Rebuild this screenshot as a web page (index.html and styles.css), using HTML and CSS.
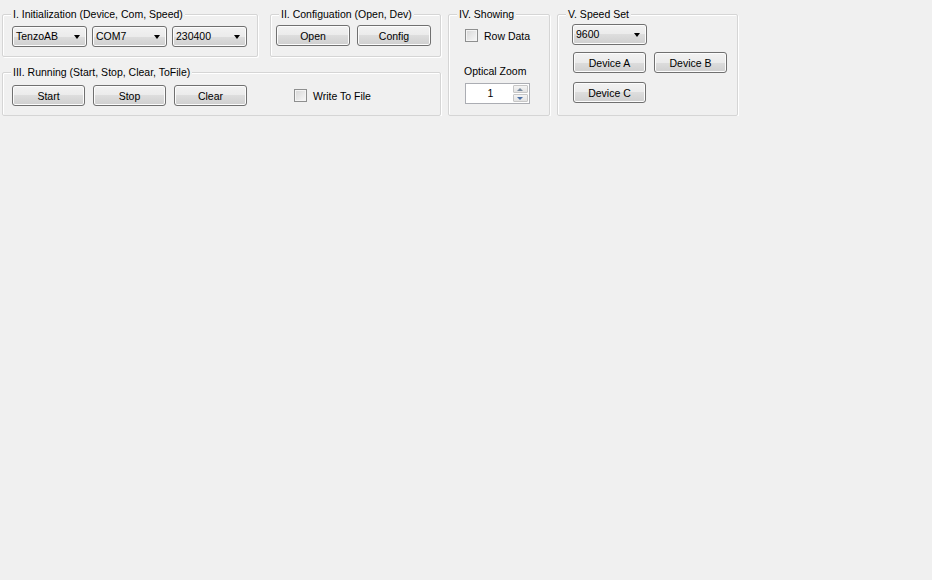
FILE: index.html
```html
<!DOCTYPE html>
<html lang="en">
<head>
    <meta charset="UTF-8">
    <title>Tenzo Monitor</title>
    <link rel="stylesheet" href="styles.css">
</head>
<body>

<div class="form">
    <div class="left">
        <div class="row">
            <!-- I. Initialization -->
            <div class="group g-init">
                <div class="caption">I. Initialization (Device, Com, Speed)</div>
                <div class="content combos">
                    <div class="combo"><span>TenzoAB</span><i class="arrow"></i></div>
                    <div class="combo"><span>COM7</span><i class="arrow"></i></div>
                    <div class="combo"><span>230400</span><i class="arrow"></i></div>
                </div>
            </div>

            <!-- II. Configuation -->
            <div class="group g-config">
                <div class="caption">II. Configuation (Open, Dev)</div>
                <div class="content buttons">
                    <button class="btn">Open</button>
                    <button class="btn">Config</button>
                </div>
            </div>
        </div>

        <!-- III. Running -->
        <div class="group g-run">
            <div class="caption">III. Running (Start, Stop, Clear, ToFile)</div>
            <div class="content buttons">
                <button class="btn">Start</button>
                <button class="btn">Stop</button>
                <button class="btn">Clear</button>
                <label class="check write"><span class="box"></span>Write To File</label>
            </div>
        </div>
    </div>

    <!-- IV. Showing -->
    <div class="group g-show">
        <div class="caption">IV. Showing</div>
        <div class="content">
            <label class="check"><span class="box"></span>Row Data</label>
            <div class="zoom-label">Optical Zoom</div>
            <div class="spin">
                <span class="spin-value">1</span>
                <span class="spin-btns">
                    <span class="spin-up"></span>
                    <span class="spin-down"></span>
                </span>
            </div>
        </div>
    </div>

    <!-- V. Speed Set -->
    <div class="group g-speed">
        <div class="caption">V. Speed Set</div>
        <div class="content">
            <div class="combo"><span>9600</span><i class="arrow"></i></div>
            <div class="devices">
                <button class="btn">Device A</button>
                <button class="btn">Device B</button>
                <button class="btn">Device C</button>
            </div>
        </div>
    </div>
</div>

</body>
</html>
```

FILE: styles.css
```css
body {
    margin: 0;
    background-color: #f0f0f0;
    font-family: "Liberation Sans", Arial, sans-serif;
    font-size: 10.5px;
    color: #000;
}
.form {
    display: flex;
    align-items: flex-start;
    gap: 7px;
    padding: 14px 0 0 2px;
}
.row {
    display: flex;
    gap: 12px;
}
.group {
    box-sizing: border-box;
    border: 1px solid #d5d5d5;
    border-radius: 2px;
    box-shadow: inset 1px 1px 0 #fff, 1px 1px 0 #fff;
}
.caption {
    width: fit-content;
    height: 13px;
    line-height: 13px;
    margin: -7px 0 0 8px;
    padding: 0 2px;
    background-color: #f0f0f0;
    white-space: nowrap;
}

/* group sizes */
.g-init {
    width: 256px;
    height: 43px;
}
.g-init .content {
    padding-left: 9px;
}
.g-config {
    width: 171px;
    height: 43px;
}
.g-config .content {
    padding-left: 5px;
}
.g-run {
    width: 439px;
    height: 44px;
    margin-top: 15px;
}
.g-run .content {
    padding-left: 9px;
}
.g-show {
    width: 102px;
    height: 102px;
}
.g-show .content {
    padding-left: 16px;
}
.g-speed {
    width: 181px;
    height: 102px;
}
.g-speed .content {
    padding-left: 14px;
}

/* combo boxes */
.combos {
    display: flex;
    gap: 5px;
    margin-top: 5px;
}
.combo {
    position: relative;
    box-sizing: border-box;
    width: 75px;
    height: 21px;
    line-height: 19px;
    padding-left: 3px;
    border: 1px solid #707070;
    border-radius: 3px;
    background: linear-gradient(#f2f2f2 0%, #ebebeb 50%, #dddddd 50%, #cfcfcf 100%);
    box-shadow: inset 0 0 0 1px #fcfcfc;
}
.arrow {
    position: absolute;
    right: 6px;
    top: 8px;
    width: 0;
    height: 0;
    border-left: 3.5px solid transparent;
    border-right: 3.5px solid transparent;
    border-top: 4px solid #000;
}
.g-speed .combo {
    margin-top: 3px;
}

/* buttons */
.btn {
    box-sizing: border-box;
    width: 73px;
    height: 21px;
    padding: 0;
    font-family: inherit;
    font-size: inherit;
    color: #000;
    border: 1px solid #707070;
    border-radius: 3px;
    background: linear-gradient(#f2f2f2 0%, #ebebeb 50%, #dddddd 50%, #cfcfcf 100%);
    box-shadow: inset 0 0 0 1px #fcfcfc;
}
.buttons {
    display: flex;
    align-items: center;
}
.g-config .buttons {
    gap: 7px;
    margin-top: 4px;
}
.g-config .btn {
    width: 74px;
}
.g-run .buttons {
    gap: 8px;
    margin-top: 6px;
}

/* checkboxes */
.check {
    display: flex;
    align-items: center;
    gap: 6px;
    height: 13px;
}
.box {
    box-sizing: border-box;
    width: 13px;
    height: 13px;
    border: 1px solid #8e8f8f;
    background: linear-gradient(135deg, #d6d6d6, #f8f8f8);
    box-shadow: inset 0 0 0 1px #f4f4f4;
}
.write {
    margin-left: 39px;
}
.g-show .check {
    margin-top: 8px;
}

/* numeric up-down */
.zoom-label {
    height: 13px;
    line-height: 13px;
    margin: 23px 0 0 -1px;
}
.spin {
    display: flex;
    box-sizing: border-box;
    width: 65px;
    height: 21px;
    margin-top: 5px;
    border: 1px solid #abadb3;
    background-color: #fff;
}
.spin-value {
    flex: 1;
    line-height: 19px;
    text-align: center;
    padding-left: 2px;
}
.spin-btns {
    display: flex;
    flex-direction: column;
    gap: 1px;
    width: 15px;
    padding: 1px 1px 1px 0;
}
.spin-up,
.spin-down {
    position: relative;
    flex: 1;
    border: 1px solid #c6c6c6;
    border-radius: 1px;
    background: linear-gradient(#f4f4f4, #e2e2e2);
}
.spin-up::after,
.spin-down::after {
    content: "";
    position: absolute;
    left: 3px;
    top: 2px;
    border-left: 3px solid transparent;
    border-right: 3px solid transparent;
}
.spin-up::after {
    border-bottom: 3px solid #7a8ba0;
}
.spin-down::after {
    border-top: 3px solid #4a6fa5;
}

/* device buttons */
.devices {
    display: grid;
    grid-template-columns: 73px 73px;
    column-gap: 8px;
    row-gap: 9px;
    margin: 7px 0 0 1px;
}
```
